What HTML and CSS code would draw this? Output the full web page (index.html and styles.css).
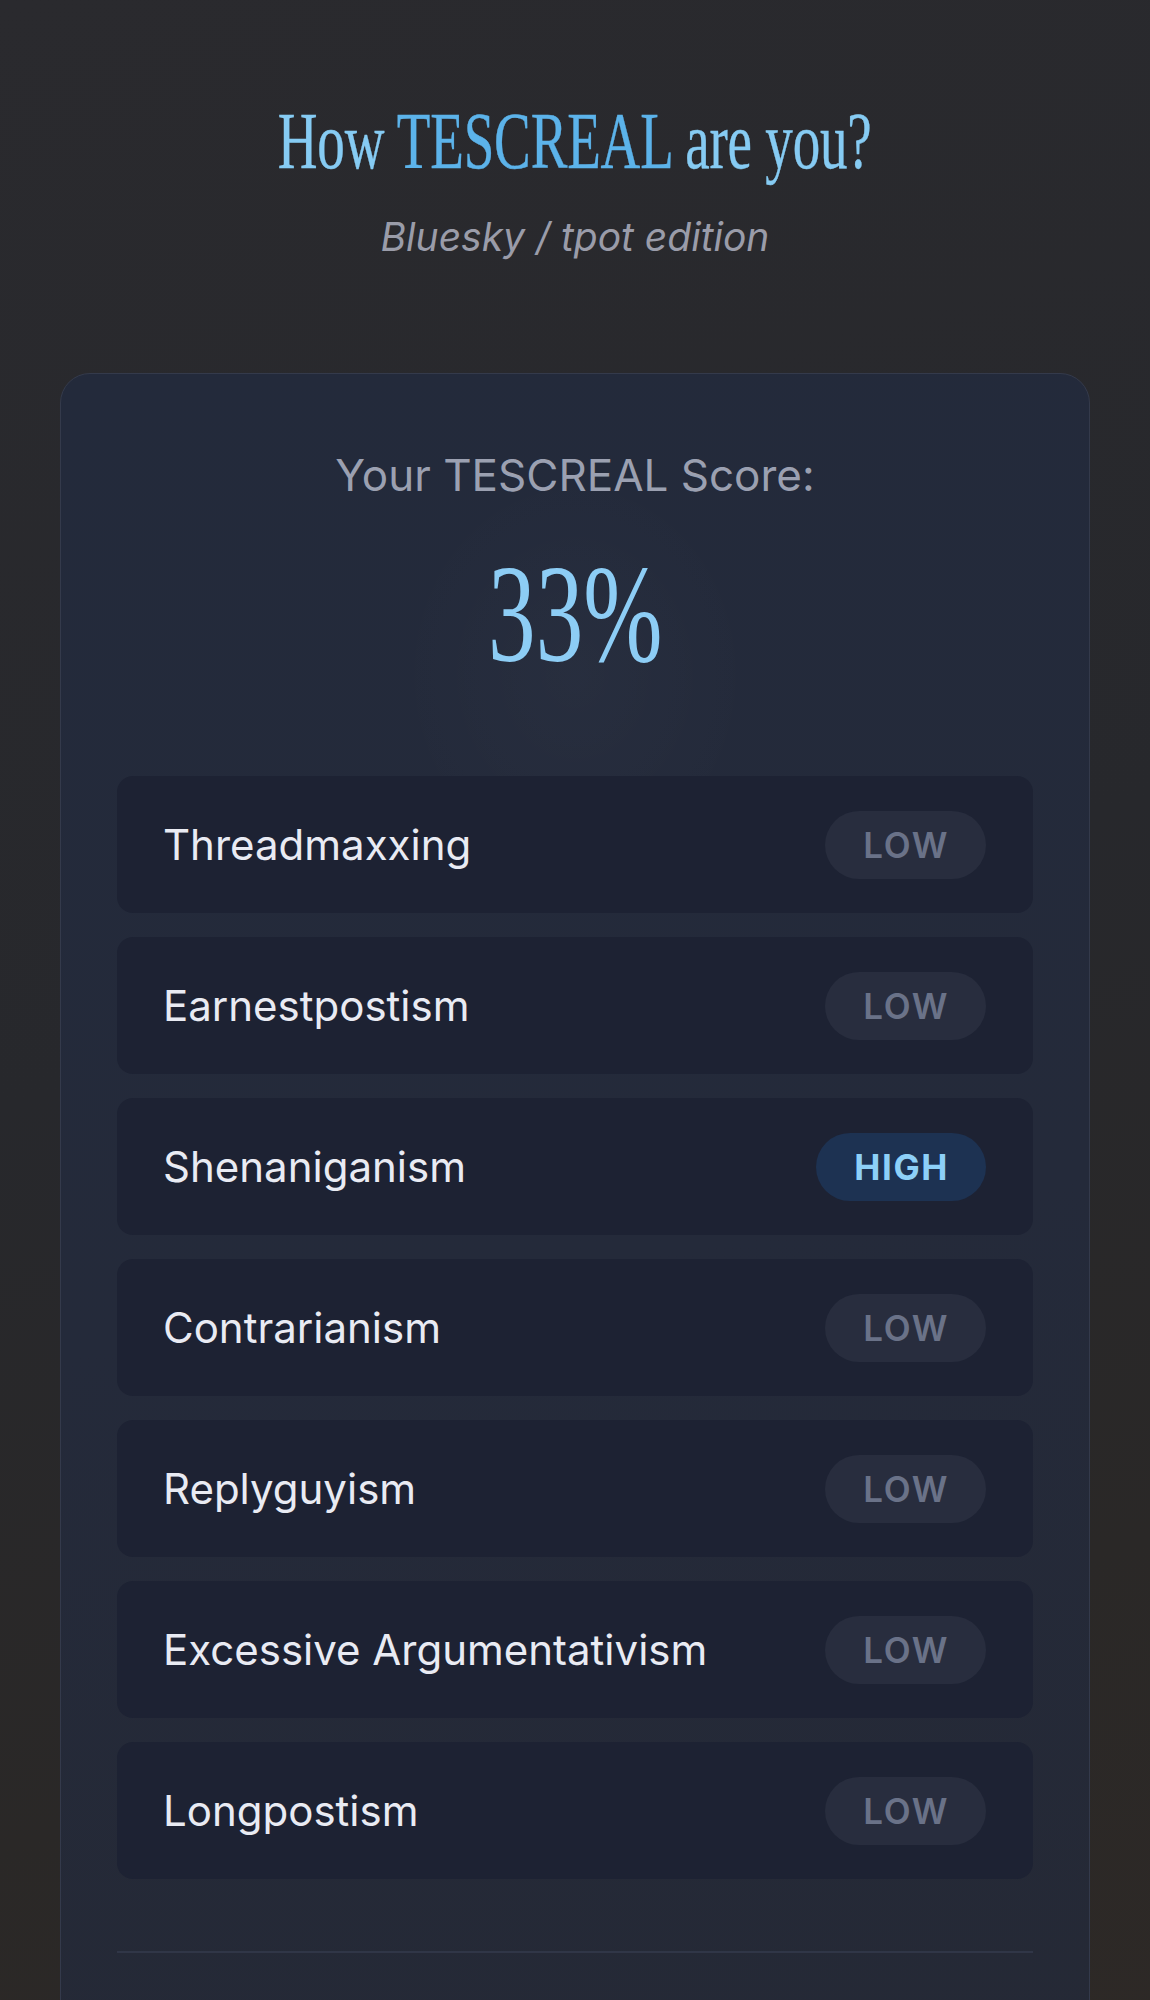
FILE: index.html
```html
<!DOCTYPE html>
<html lang="en">
<head>
<meta charset="utf-8">
<title>How TESCREAL are you?</title>
<link rel="stylesheet" href="styles.css">
</head>
<body>
<main class="page">
  <header class="hero">
    <h1 class="title"><span class="title-inner">How <span class="accent">TESCREAL</span> are you?</span></h1>
    <p class="subtitle">Bluesky / tpot edition</p>
  </header>

  <section class="card">
    <div class="score-label">Your TESCREAL Score:</div>
    <div class="score"><span class="score-inner">33%</span></div>

    <ul class="traits">
      <li class="trait"><span class="trait-name">Threadmaxxing</span><span class="pill">LOW</span></li>
      <li class="trait"><span class="trait-name">Earnestpostism</span><span class="pill">LOW</span></li>
      <li class="trait"><span class="trait-name">Shenaniganism</span><span class="pill pill-high">HIGH</span></li>
      <li class="trait"><span class="trait-name">Contrarianism</span><span class="pill">LOW</span></li>
      <li class="trait"><span class="trait-name">Replyguyism</span><span class="pill">LOW</span></li>
      <li class="trait"><span class="trait-name">Excessive Argumentativism</span><span class="pill">LOW</span></li>
      <li class="trait"><span class="trait-name">Longpostism</span><span class="pill">LOW</span></li>
    </ul>

    <hr class="divider">
  </section>
</main>
</body>
</html>
```

FILE: styles.css
```css
html, body {
  margin: 0;
  padding: 0;
}

body {
  min-height: 2000px;
  background: linear-gradient(165deg, #2a2a2e 0%, #27282c 45%, #2a2827 75%, #2e2926 100%);
  font-family: Inter, "Noto Sans", sans-serif;
  color: #e8eaf2;
  overflow: hidden;
}

.page {
  padding: 101px 60px 0;
}

.hero {
  text-align: center;
}

.title {
  margin: 0;
  font-family: "Liberation Serif", "Times New Roman", serif;
  font-weight: 400;
  font-size: 81px;
  line-height: 81px;
  color: #86cbf3;
  letter-spacing: -0.3px;
  -webkit-text-stroke: 0.4px currentColor;
}

.title-inner {
  display: inline-block;
  transform: scaleX(0.68);
  white-space: nowrap;
}

.accent {
  color: #5cb3ea;
}

.subtitle {
  margin: 32px 0 0;
  font-style: italic;
  font-size: 39px;
  line-height: 46px;
  color: #9a9ca9;
}

.card {
  margin-top: 113px;
  border: 1px solid #343a4b;
  border-radius: 30px;
  background:
    radial-gradient(ellipse 260px 300px at 50% 300px, rgba(255,255,255,0.018), rgba(255,255,255,0) 70%),
    linear-gradient(170deg, #232a3b 0%, #242a3a 50%, #252935 100%);
  padding: 75px 56px 200px;
}

.score-label {
  text-align: center;
  font-size: 44px;
  line-height: 52px;
  color: #9ba0b1;
}

.score {
  margin-top: 43px;
  text-align: center;
  font-family: "Liberation Serif", "Times New Roman", serif;
  font-size: 140px;
  line-height: 140px;
  color: #8dcdf5;
}

.score-inner {
  display: inline-block;
  transform: scaleX(0.68);
}

.traits {
  list-style: none;
  margin: 92px 0 0;
  padding: 0;
  display: flex;
  flex-direction: column;
  gap: 24px;
}

.trait {
  height: 137px;
  box-sizing: border-box;
  padding: 0 47px 0 46px;
  display: flex;
  align-items: center;
  justify-content: space-between;
  background: #1d2233;
  border-radius: 16px;
}

.trait-name {
  font-size: 42px;
  color: #e9ebf3;
}

.pill {
  height: 68px;
  box-sizing: border-box;
  padding: 0 37px 0 38px;
  display: inline-flex;
  align-items: center;
  border-radius: 34px;
  background: #282d3e;
  color: #6a7288;
  font-size: 35px;
  font-weight: 600;
  letter-spacing: 1.6px;
}

.pill-high {
  background: #1d3252;
  color: #8dd0f8;
  font-weight: 700;
}

.divider {
  margin: 72px 0 0;
  border: 0;
  height: 2px;
  background: #303647;
}
```
